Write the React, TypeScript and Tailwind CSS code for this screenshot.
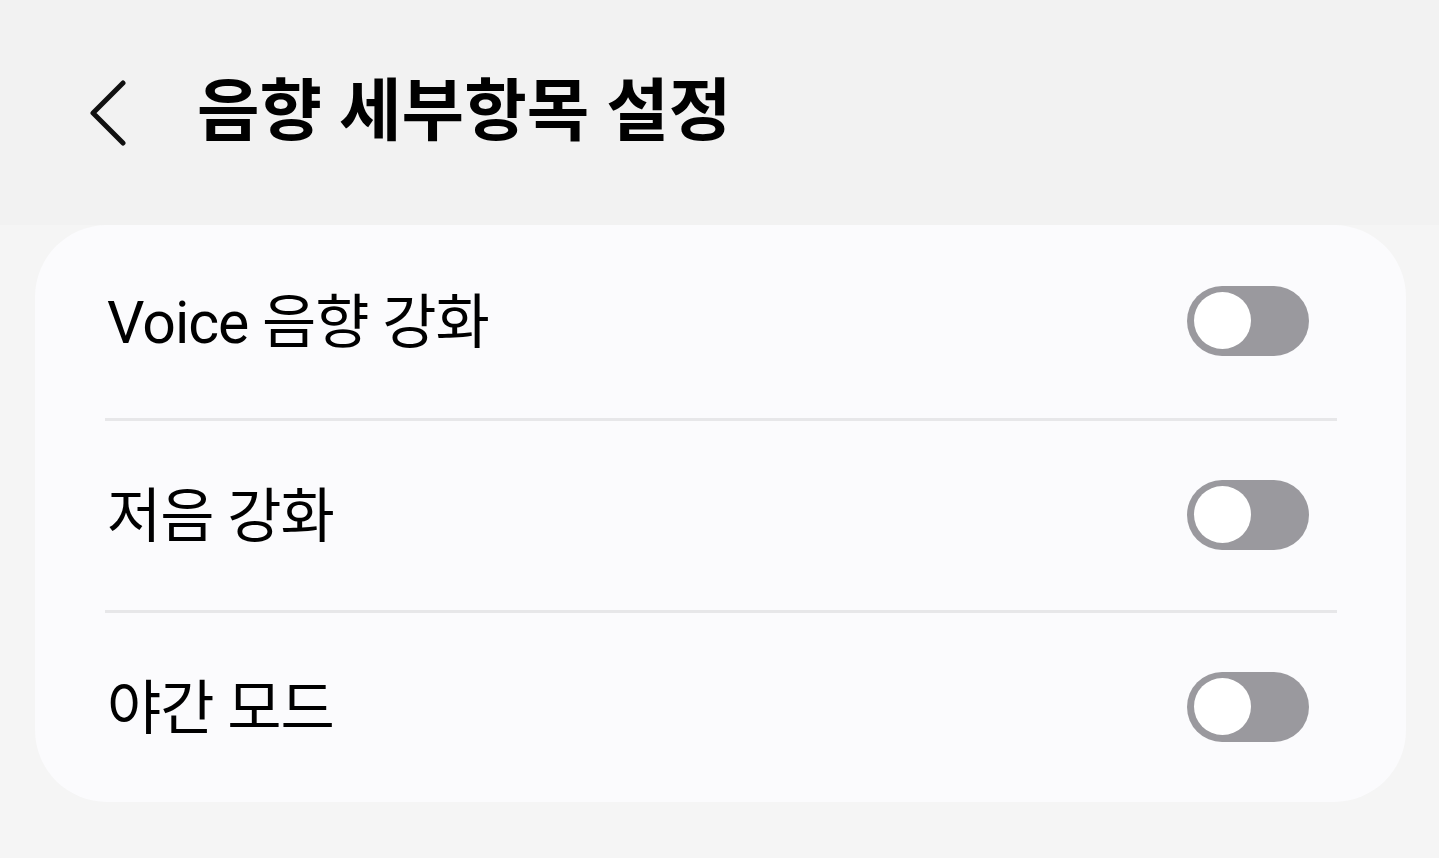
import React from "react";

function Toggle() {
  return (
    <div className="w-[122px] h-[70px] rounded-full bg-[#9a999e] flex items-center pl-[7px] -mt-[2px]">
      <div className="w-[57px] h-[57px] rounded-full bg-white" />
    </div>
  );
}

function Row({ label, h }: { label: string; h: string }) {
  return (
    <div className={`${h} flex items-center justify-between pl-[72px] pr-[97px]`}>
      <span className="text-[59px] leading-none text-black tracking-[-1px] mt-[2px]">{label}</span>
      <Toggle />
    </div>
  );
}

export default function App() {
  const font = { fontFamily: 'Roboto, "Noto Sans CJK KR", sans-serif' };
  return (
    <div style={font} className="w-[1439px] h-[858px] bg-[#f5f5f5] flex flex-col overflow-hidden">
      <div className="h-[225px] bg-[#f2f2f2] flex items-center shrink-0">
        <div className="w-[197px] flex items-center pl-[88px]">
          <svg width="42" height="66" viewBox="0 0 42 66" fill="none">
            <path d="M35 3 L5 33 L35 63" stroke="#111" strokeWidth="5" strokeLinecap="round" strokeLinejoin="round" />
          </svg>
        </div>
        <h1 className="text-[68px] font-bold text-black leading-none -mt-[2px]">음향 세부항목 설정</h1>
      </div>
      <div className="px-[35px]">
        <div className="w-[1371px] h-[577px] bg-[#fbfbfd] rounded-[72px] flex flex-col">
          <Row label="Voice 음향 강화" h="h-[193px]" />
          <div className="h-[3px] bg-[#e7e7e9] ml-[70px] mr-[69px]" />
          <Row label="저음 강화" h="h-[189px]" />
          <div className="h-[3px] bg-[#e7e7e9] ml-[70px] mr-[69px]" />
          <Row label="야간 모드" h="h-[189px]" />
        </div>
      </div>
    </div>
  );
}
